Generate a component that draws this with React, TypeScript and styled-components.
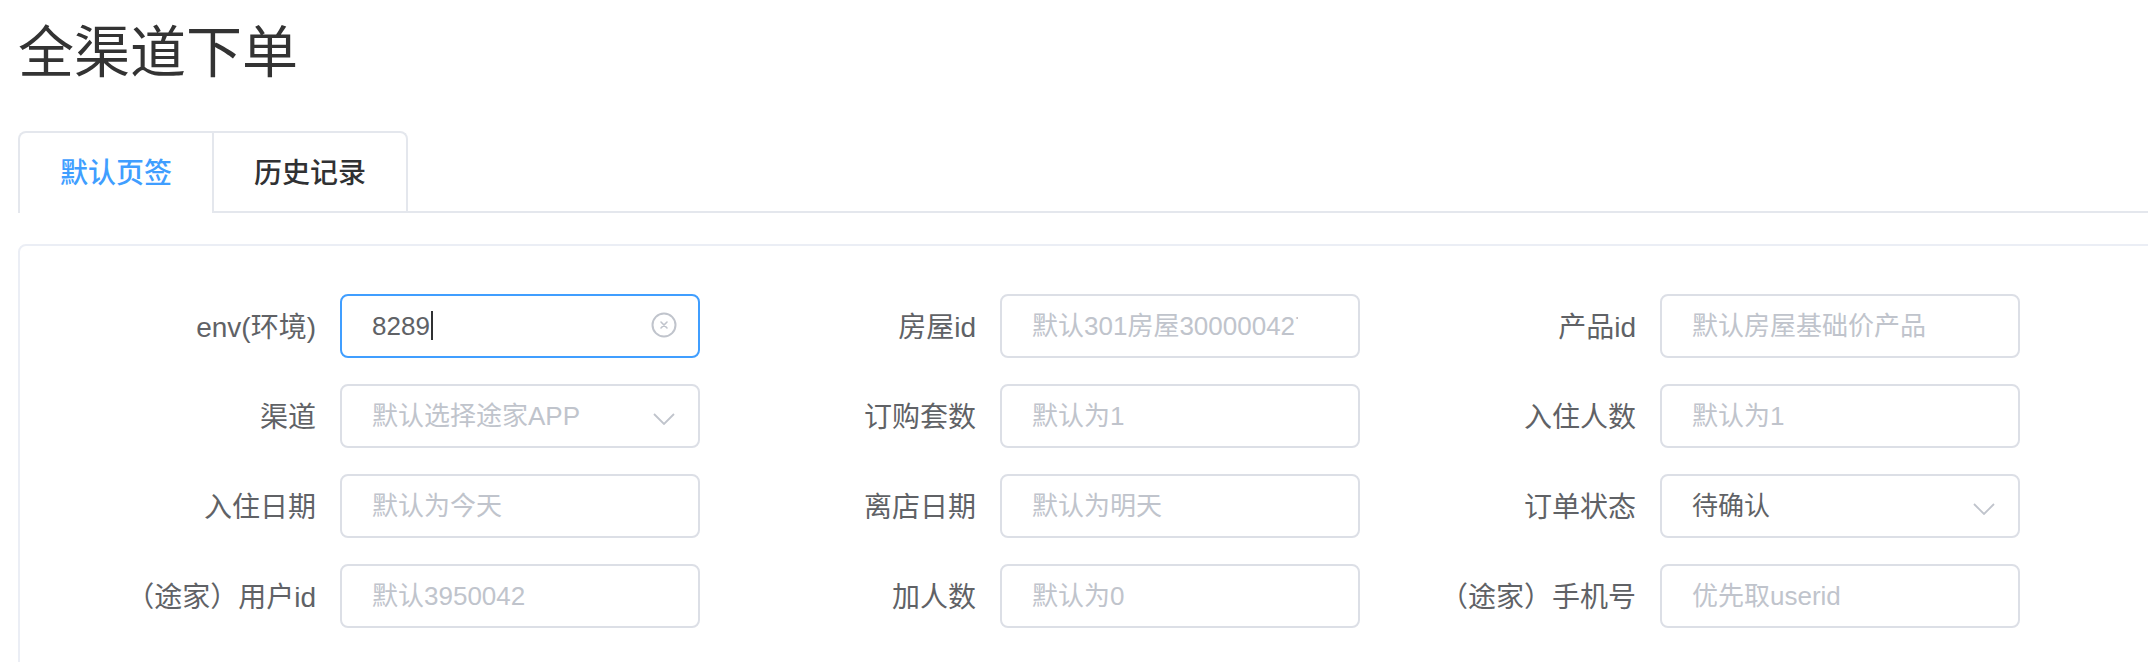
import React from 'react';
import styled, { createGlobalStyle } from 'styled-components';

const GlobalStyle = createGlobalStyle`
  html, body {
    margin: 0;
    padding: 0;
    overflow: hidden;
    background: #fff;
    font-family: "Liberation Sans", "Noto Sans CJK SC", sans-serif;
  }
`;

const Page = styled.div`
  width: 2300px;
  box-sizing: border-box;
  padding-left: 18px;
`;

const Title = styled.h1`
  margin: 0 0 38px;
  padding-top: 13px;
  font-size: 56px;
  line-height: 80px;
  font-weight: 400;
  color: #333;
`;

const TabsHeader = styled.div`
  display: flex;
  border-bottom: 2px solid #e4e7ed;
  margin-bottom: 31px;
`;

const TabNav = styled.div`
  display: flex;
  border: 2px solid #e4e7ed;
  border-bottom: none;
  border-radius: 8px 8px 0 0;
  margin-bottom: -2px;
`;

const Tab = styled.div<{ $active?: boolean }>`
  padding: 4px 40px 0;
  line-height: 74px;
  font-size: 28px;
  font-weight: 500;
  color: ${(p) => (p.$active ? '#409eff' : '#303133')};
  border-bottom: 2px solid ${(p) => (p.$active ? '#fff' : 'transparent')};
  & + & {
    border-left: 2px solid #e4e7ed;
  }
`;

const Card = styled.div`
  border: 2px solid #ebeef5;
  border-radius: 8px;
  padding: 40px 40px 80px;
`;

const FormGrid = styled.div`
  display: grid;
  grid-template-columns: repeat(3, 640px);
  grid-auto-rows: 80px;
  column-gap: 20px;
  row-gap: 10px;
`;

const FormItem = styled.div`
  display: flex;
  align-items: center;
`;

const Label = styled.label`
  width: 280px;
  box-sizing: border-box;
  padding: 4px 24px 0 0;
  text-align: right;
  font-size: 28px;
  line-height: 76px;
  color: #606266;
  white-space: nowrap;
`;

const Field = styled.div<{ $focused?: boolean }>`
  width: 360px;
  height: 64px;
  box-sizing: border-box;
  display: flex;
  align-items: center;
  border: 2px solid ${(p) => (p.$focused ? '#409eff' : '#dcdfe6')};
  border-radius: 8px;
  padding-left: 30px;
  background: #fff;
`;

const FieldText = styled.span<{ $placeholder?: boolean }>`
  flex: 1;
  min-width: 0;
  overflow: hidden;
  white-space: nowrap;
  font-size: 26px;
  line-height: 60px;
  color: ${(p) => (p.$placeholder ? '#c0c4cc' : '#606266')};
`;

const Caret = styled.span`
  display: inline-block;
  width: 2px;
  height: 29px;
  margin-left: 1px;
  background: #303133;
  vertical-align: -5px;
`;

const Suffix = styled.span<{ $kind?: 'clear' | 'arrow' }>`
  flex: none;
  width: 52px;
  height: 100%;
  margin-right: 8px;
  display: flex;
  align-items: center;
  justify-content: center;
  color: #c0c4cc;
  svg {
    margin-top: ${(p) => (p.$kind === 'arrow' ? '5px' : p.$kind === 'clear' ? '-3px' : '0')};
  }
`;

const ClearIcon = () => (
  <svg width="26" height="26" viewBox="0 0 26 26" fill="none" stroke="currentColor">
    <circle cx="13" cy="13" r="11.5" strokeWidth="2" />
    <path d="M10 10 L16 16 M16 10 L10 16" strokeWidth="1.6" strokeLinecap="round" />
  </svg>
);

const ArrowIcon = () => (
  <svg width="22" height="12" viewBox="0 0 22 12" fill="none" stroke="currentColor">
    <polyline points="1,1 11,11 21,1" strokeWidth="1.8" />
  </svg>
);

type FieldDef = {
  label: string;
  value?: string;
  placeholder?: string;
  focused?: boolean;
  suffix?: 'clear' | 'arrow';
};

const fields: FieldDef[] = [
  { label: 'env(环境)', value: '8289', focused: true, suffix: 'clear' },
  { label: '房屋id', placeholder: '默认301房屋3000004272' },
  { label: '产品id', placeholder: '默认房屋基础价产品' },
  { label: '渠道', placeholder: '默认选择途家APP', suffix: 'arrow' },
  { label: '订购套数', placeholder: '默认为1' },
  { label: '入住人数', placeholder: '默认为1' },
  { label: '入住日期', placeholder: '默认为今天' },
  { label: '离店日期', placeholder: '默认为明天' },
  { label: '订单状态', value: '待确认', suffix: 'arrow' },
  { label: '（途家）用户id', placeholder: '默认3950042' },
  { label: '加人数', placeholder: '默认为0' },
  { label: '（途家）手机号', placeholder: '优先取userid' },
];

export default function App() {
  return (
    <>
      <GlobalStyle />
      <Page>
        <Title>全渠道下单</Title>
        <TabsHeader>
          <TabNav>
            <Tab $active>默认页签</Tab>
            <Tab>历史记录</Tab>
          </TabNav>
        </TabsHeader>
        <Card>
          <FormGrid>
            {fields.map((f) => (
              <FormItem key={f.label}>
                <Label>{f.label}</Label>
                <Field $focused={f.focused}>
                  <FieldText $placeholder={!f.value}>
                    {f.value ?? f.placeholder}
                    {f.focused && <Caret />}
                  </FieldText>
                  <Suffix $kind={f.suffix}>
                    {f.suffix === 'clear' && <ClearIcon />}
                    {f.suffix === 'arrow' && <ArrowIcon />}
                  </Suffix>
                </Field>
              </FormItem>
            ))}
          </FormGrid>
        </Card>
      </Page>
    </>
  );
}
